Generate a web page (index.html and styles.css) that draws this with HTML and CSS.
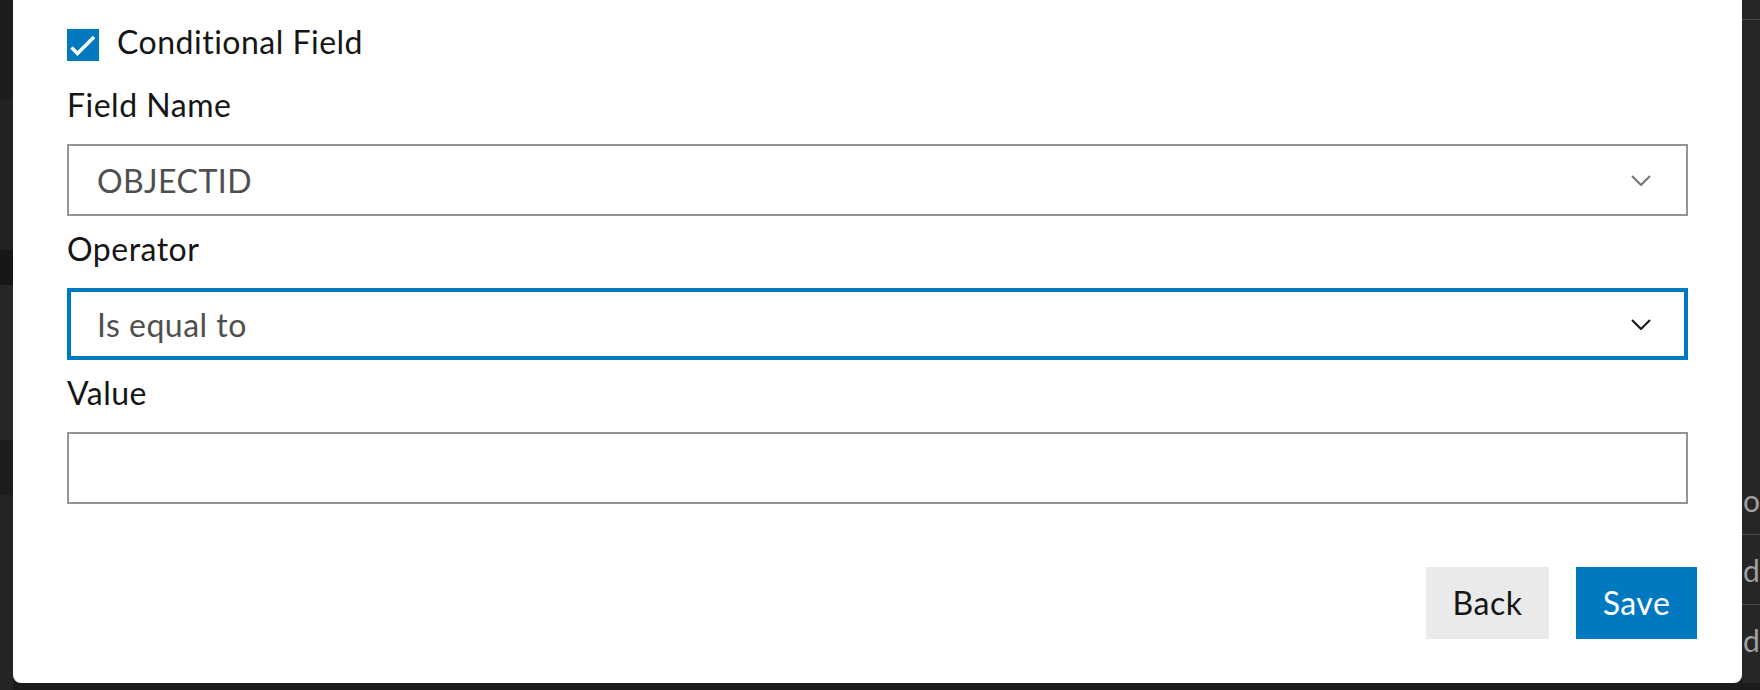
FILE: index.html
```html
<!DOCTYPE html>
<html lang="en">
<head>
<meta charset="utf-8">
<title>Conditional Field</title>
<link rel="stylesheet" href="styles.css">
</head>
<body>
<div class="screen">
  <div class="bg-left">
    <div class="band band-a"></div>
    <div class="band band-b"></div>
    <div class="band band-c"></div>
    <div class="band band-d"></div>
    <div class="band band-e"></div>
    <div class="band band-f"></div>
  </div>

  <div class="dialog">
    <div class="dialog-body">
      <label class="check-row">
        <span class="checkbox">
          <svg width="32" height="32" viewBox="0 0 32 32" aria-hidden="true">
            <rect width="32" height="32" fill="#0079c1"/>
            <polyline points="4.5,18.5 10.5,24.5 27,8" fill="none" stroke="#ffffff" stroke-width="3.6"/>
          </svg>
        </span>
        <span class="check-label">Conditional Field</span>
      </label>

      <div class="field">
        <div class="field-label">Field Name</div>
        <div class="select">
          <span class="select-value">OBJECTID</span>
          <svg class="chevron" width="20" height="11" viewBox="0 0 20 11" aria-hidden="true">
            <polyline points="1,1 10,10 19,1" fill="none" stroke="#727272" stroke-width="2"/>
          </svg>
        </div>
      </div>

      <div class="field">
        <div class="field-label">Operator</div>
        <div class="select select-focus">
          <span class="select-value">Is equal to</span>
          <svg class="chevron" width="20" height="11" viewBox="0 0 20 11" aria-hidden="true">
            <polyline points="1,1 10,10 19,1" fill="none" stroke="#151515" stroke-width="2"/>
          </svg>
        </div>
      </div>

      <div class="field">
        <div class="field-label">Value</div>
        <div class="input"></div>
      </div>
    </div>

    <div class="dialog-footer">
      <div class="btn btn-secondary" role="button">Back</div>
      <div class="btn btn-primary" role="button">Save</div>
    </div>
  </div>

  <div class="bg-right">
    <div class="bg-rule"></div>
    <div class="bg-row bg-row-first">o</div>
    <div class="bg-row">d</div>
    <div class="bg-row bg-row-last">d S</div>
  </div>
</div>
</body>
</html>
```

FILE: styles.css
```css
* {
  box-sizing: border-box;
}

html,
body {
  margin: 0;
  padding: 0;
  width: 1760px;
  height: 690px;
  overflow: hidden;
  background: #1b1b1b;
  font-family: "Lato", "Open Sans", "Noto Sans", sans-serif;
  font-weight: 400;
  letter-spacing: 0.5px;
}

.screen {
  display: flex;
  align-items: flex-start;
  width: 1760px;
  height: 690px;
}

/* ---------- dark backdrop, left ---------- */
.bg-left {
  flex: none;
  width: 13px;
  height: 690px;
  display: flex;
  flex-direction: column;
}

.band { flex: none; }
.band-a { height: 100px; background: #1d1d1d; }
.band-b { height: 150px; background: #222222; }
.band-c { height: 35px; background: #171717; }
.band-d { height: 155px; background: #262626; }
.band-e { height: 55px; background: #1c1c1c; }
.band-f { flex: 1; background: #242424; }

/* ---------- dialog ---------- */
.dialog {
  flex: none;
  width: 1729px;
  height: 683px;
  background: #ffffff;
  border-radius: 0 0 8px 8px;
  display: flex;
  flex-direction: column;
  color: #151515;
}

.dialog-body {
  padding: 22px 54px 0 54px;
}

.check-row {
  display: flex;
  align-items: flex-start;
  gap: 18px;
  height: 40px;
  margin-bottom: 19px;
}

.checkbox {
  flex: none;
  width: 32px;
  height: 32px;
  margin-top: 7px;
  display: block;
}

.checkbox svg {
  display: block;
}

.check-label {
  font-size: 32px;
  line-height: 40px;
  color: #151515;
}

.field {
  margin-bottom: 9px;
}

.field-label {
  font-size: 32px;
  line-height: 48px;
  margin-bottom: 15px;
  color: #151515;
}

.select,
.input {
  height: 72px;
  border: 2px solid #959595;
  background: #ffffff;
  display: flex;
  align-items: center;
  padding-left: 28px;
}

.select-focus {
  border: 4px solid #0079c1;
  padding-left: 26px;
}

.select-value {
  flex: 1;
  font-size: 32px;
  color: #4f4f4f;
}

.chevron {
  flex: none;
  display: block;
  margin-right: 35px;
}

.select-focus .chevron {
  margin-right: 33px;
}

/* ---------- footer ---------- */
.dialog-footer {
  display: flex;
  justify-content: flex-end;
  gap: 27px;
  padding: 54px 45px 44px 0;
  margin-top: auto;
}

.btn {
  flex: none;
  height: 72px;
  display: flex;
  align-items: center;
  justify-content: center;
  white-space: nowrap;
  font-size: 32px;
  line-height: 40px;
  cursor: pointer;
}

.btn-secondary {
  width: 123px;
  background: #eaeaea;
  color: #151515;
}

.btn-primary {
  width: 121px;
  background: #0079c1;
  color: #ffffff;
}

/* ---------- dark backdrop, right ---------- */
.bg-right {
  flex: none;
  width: 18px;
  height: 683px;
  background: #262626;
  overflow: hidden;
  padding-top: 19px;
  display: flex;
  flex-direction: column;
}

.bg-rule {
  height: 1px;
  background: #4a4a4a;
  flex: none;
}

.bg-row {
  flex: none;
  height: 70px;
  border-bottom: 1px solid #4a4a4a;
  display: flex;
  align-items: center;
  font-size: 30px;
  letter-spacing: 0;
  color: #a0a0a0;
  white-space: nowrap;
  padding-left: 1px;
}

.bg-row-first {
  margin-top: 445px;
}

.bg-row-last {
  border-bottom: none;
}
```
